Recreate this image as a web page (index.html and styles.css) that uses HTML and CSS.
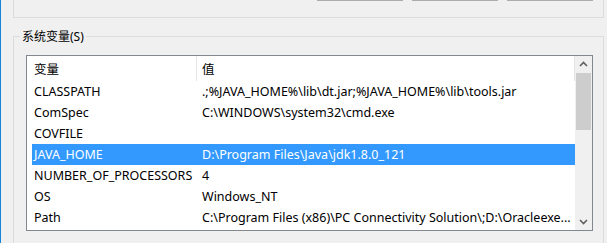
FILE: index.html
```html
<!DOCTYPE html>
<html lang="zh-CN">
<head>
    <meta charset="UTF-8">
    <title>环境变量</title>
    <link rel="stylesheet" href="styles.css">
</head>
<body>
    <div class="frame">
        <div class="top-group">
            <div class="btn-row">
                <div class="btn"></div>
                <div class="btn"></div>
                <div class="btn"></div>
            </div>
        </div>

        <fieldset class="sys-group">
            <legend>系统变量(S)</legend>
            <div class="listbox">
                <div class="list-body">
                    <div class="list-head">
                        <div class="col-name">变量</div>
                        <div class="col-value">值</div>
                    </div>
                    <div class="row">
                        <div class="col-name">CLASSPATH</div>
                        <div class="col-value">.;%JAVA_HOME%\lib\dt.jar;%JAVA_HOME%\lib\tools.jar</div>
                    </div>
                    <div class="row">
                        <div class="col-name">ComSpec</div>
                        <div class="col-value">C:\WINDOWS\system32\cmd.exe</div>
                    </div>
                    <div class="row">
                        <div class="col-name">COVFILE</div>
                        <div class="col-value"></div>
                    </div>
                    <div class="row selected">
                        <div class="col-name">JAVA_HOME</div>
                        <div class="col-value">D:\Program Files\Java\jdk1.8.0_121</div>
                    </div>
                    <div class="row">
                        <div class="col-name">NUMBER_OF_PROCESSORS</div>
                        <div class="col-value">4</div>
                    </div>
                    <div class="row">
                        <div class="col-name">OS</div>
                        <div class="col-value">Windows_NT</div>
                    </div>
                    <div class="row">
                        <div class="col-name">Path</div>
                        <div class="col-value">C:\Program Files (x86)\PC Connectivity Solution\;D:\Oracleexe...</div>
                    </div>
                </div>
                <div class="scrollbar">
                    <svg class="arrow" width="17" height="17" viewBox="0 0 17 17">
                        <path d="M5 10 L8.5 6.5 L12 10" fill="none" stroke="#606060" stroke-width="1.6"/>
                    </svg>
                    <div class="thumb"></div>
                    <div class="track"></div>
                    <svg class="arrow" width="17" height="17" viewBox="0 0 17 17">
                        <path d="M5 7 L8.5 10.5 L12 7" fill="none" stroke="#606060" stroke-width="1.6"/>
                    </svg>
                </div>
            </div>
        </fieldset>
    </div>
</body>
</html>
```

FILE: styles.css
```css
body, html {
    margin: 0;
    padding: 0;
    height: 100%;
    overflow: hidden;
}
body {
    background-color: #f0f0f0;
    border-left: 1px solid #1883d7;
    box-sizing: border-box;
    font-family: "Noto Sans", "Noto Sans CJK SC", sans-serif;
    font-size: 12px;
    color: #000;
}
.frame {
    padding: 0 3px 0 12px;
}
.top-group {
    height: 17px;
    border: 1px solid #dcdcdc;
    border-top: none;
}
.btn-row {
    display: flex;
    justify-content: flex-end;
    gap: 9px;
    padding-right: 10px;
}
.btn {
    width: 86px;
    height: 1px;
    background-color: #adadad;
}
.sys-group {
    margin: 10px 0 0 0;
    padding: 10px 10px 0 12px;
    border: 1px solid #dcdcdc;
    border-bottom: none;
    box-sizing: border-box;
    height: 215px;
}
.sys-group legend {
    margin-left: -6px;
    padding: 0 2px;
    line-height: 17px;
}
.listbox {
    display: flex;
    width: 567px;
    height: 176px;
    box-sizing: border-box;
    border: 1px solid #828790;
    background-color: #fff;
}
.list-body {
    flex: 1;
    min-width: 0;
    font-size: 12.5px;
}
.list-head, .row {
    display: flex;
    margin-left: 5px;
    white-space: nowrap;
}
.list-head {
    height: 25px;
    align-items: center;
}
.row {
    height: 21px;
    align-items: center;
}
.col-name {
    width: 162px;
    padding-left: 2px;
}
.col-value {
    flex: 1;
    padding-left: 6px;
    overflow: hidden;
}
.list-head .col-value {
    align-self: stretch;
    display: flex;
    align-items: center;
    border-left: 1px solid #e5e5e5;
    border-right: 1px solid #e5e5e5;
    padding-left: 5px;
}
.row.selected {
    background-color: #3399ff;
    color: #fff;
}
.scrollbar {
    width: 17px;
    display: flex;
    flex-direction: column;
    background-color: #f0f0f0;
}
.arrow {
    display: block;
    flex: none;
}
.thumb {
    height: 57px;
    margin: 0 1px;
    background-color: #cdcdcd;
}
.track {
    flex: 1;
}
```
